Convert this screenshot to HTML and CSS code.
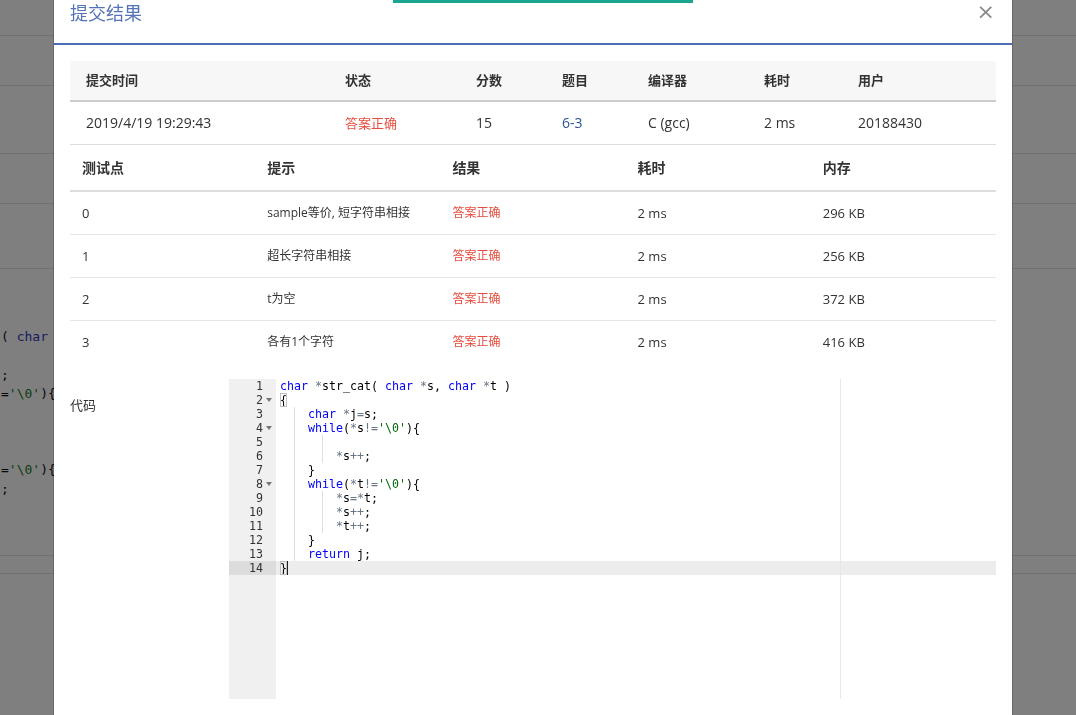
FILE: index.html
```html
<!DOCTYPE html>
<html lang="zh-CN">
<head>
<meta charset="utf-8">
<title>提交结果</title>
<link rel="stylesheet" href="styles.css">
</head>
<body>
<div class="page">
  <div class="bg-row r1"></div>
  <div class="bg-row r2"></div>
  <div class="bg-row r3"></div>
  <div class="bg-row r4"></div>
  <div class="bg-row r5"></div>
  <div class="bg-row bg-code-area">
<pre class="bg-code">( <span class="bkw">char</span>

;
=<span class="bstr">'\0'</span>){



=<span class="bstr">'\0'</span>){
;</pre>
  </div>
  <div class="bg-row r7"></div>
</div>

<div class="overlay"></div>
<div class="toast"></div>

<div class="modal">
  <div class="modal-header">
    <span class="modal-title">提交结果</span>
    <span class="modal-close">×</span>
  </div>
  <div class="modal-body">
    <table class="t-summary">
      <colgroup>
        <col class="c1"><col class="c2"><col class="c3"><col class="c4"><col class="c5"><col class="c6"><col class="c7">
      </colgroup>
      <thead>
        <tr><th>提交时间</th><th>状态</th><th>分数</th><th>题目</th><th>编译器</th><th>耗时</th><th>用户</th></tr>
      </thead>
      <tbody>
        <tr>
          <td>2019/4/19 19:29:43</td>
          <td class="ok s13">答案正确</td>
          <td>15</td>
          <td><span class="link">6-3</span></td>
          <td>C (gcc)</td>
          <td>2 ms</td>
          <td>20188430</td>
        </tr>
      </tbody>
    </table>

    <table class="t-cases">
      <thead>
        <tr><th>测试点</th><th>提示</th><th>结果</th><th>耗时</th><th>内存</th></tr>
      </thead>
      <tbody>
        <tr><td>0</td><td class="s12">sample等价, 短字符串相接</td><td class="ok s12">答案正确</td><td>2 ms</td><td>296 KB</td></tr>
        <tr><td>1</td><td class="s12">超长字符串相接</td><td class="ok s12">答案正确</td><td>2 ms</td><td>256 KB</td></tr>
        <tr><td>2</td><td class="s12">t为空</td><td class="ok s12">答案正确</td><td>2 ms</td><td>372 KB</td></tr>
        <tr><td>3</td><td class="s12">各有1个字符</td><td class="ok s12">答案正确</td><td>2 ms</td><td>416 KB</td></tr>
      </tbody>
    </table>

    <div class="code-section">
      <div class="code-label">代码</div>
      <div class="editor">
        <div class="gutter">
          <div class="gcell"><span>1</span><span class="fold"></span></div>
          <div class="gcell"><span>2</span><span class="fold open"></span></div>
          <div class="gcell"><span>3</span><span class="fold"></span></div>
          <div class="gcell"><span>4</span><span class="fold open"></span></div>
          <div class="gcell"><span>5</span><span class="fold"></span></div>
          <div class="gcell"><span>6</span><span class="fold"></span></div>
          <div class="gcell"><span>7</span><span class="fold"></span></div>
          <div class="gcell"><span>8</span><span class="fold open"></span></div>
          <div class="gcell"><span>9</span><span class="fold"></span></div>
          <div class="gcell"><span>10</span><span class="fold"></span></div>
          <div class="gcell"><span>11</span><span class="fold"></span></div>
          <div class="gcell"><span>12</span><span class="fold"></span></div>
          <div class="gcell"><span>13</span><span class="fold"></span></div>
          <div class="gcell active"><span>14</span><span class="fold"></span></div>
        </div>
        <div class="code">
          <div class="print-margin"></div>
          <div class="line"><span class="kw">char</span> <span class="op">*</span>str_cat( <span class="kw">char</span> <span class="op">*</span>s, <span class="kw">char</span> <span class="op">*</span>t )</div>
          <div class="line"><span class="br">{</span></div>
          <div class="line"><span class="ind"></span><span class="kw">char</span> <span class="op">*</span>j<span class="op">=</span>s;</div>
          <div class="line"><span class="ind"></span><span class="kw">while</span>(<span class="op">*</span>s<span class="op">!=</span><span class="str">'\0'</span>){</div>
          <div class="line"><span class="ind"></span><span class="ind"></span></div>
          <div class="line"><span class="ind"></span><span class="ind"></span><span class="op">*</span>s<span class="op">++</span>;</div>
          <div class="line"><span class="ind"></span>}</div>
          <div class="line"><span class="ind"></span><span class="kw">while</span>(<span class="op">*</span>t<span class="op">!=</span><span class="str">'\0'</span>){</div>
          <div class="line"><span class="ind"></span><span class="ind"></span><span class="op">*</span>s<span class="op">=*</span>t;</div>
          <div class="line"><span class="ind"></span><span class="ind"></span><span class="op">*</span>s<span class="op">++</span>;</div>
          <div class="line"><span class="ind"></span><span class="ind"></span><span class="op">*</span>t<span class="op">++</span>;</div>
          <div class="line"><span class="ind"></span>}</div>
          <div class="line"><span class="ind"></span><span class="kw">return</span> j;</div>
          <div class="line active"><span class="br">}</span><span class="cursor"></span></div>
        </div>
      </div>
    </div>
  </div>
</div>
</body>
</html>
```

FILE: styles.css
```css
* { box-sizing: border-box; }

html, body {
  margin: 0;
  padding: 0;
}

body {
  width: 1076px;
  height: 715px;
  overflow: hidden;
  position: relative;
  background: #fff;
  font-family: "Open Sans", "Noto Sans CJK SC", sans-serif;
  color: #333;
}

/* ---------- background page (under the overlay) ---------- */
.bg-row { border-bottom: 1px solid #e3e3e3; }
.r1 { height: 36px; }
.r2 { height: 50px; }
.r3 { height: 68px; }
.r4 { height: 50px; }
.r5 { height: 65px; }
.bg-code-area { height: 287px; padding-top: 58px; overflow: hidden; }
.r7 { height: 18px; }

.bg-code {
  margin: 0;
  padding-left: 1px;
  font-family: "DejaVu Sans Mono", monospace;
  font-size: 13px;
  line-height: 19px;
  color: #111;
}
.bkw { color: #3636b8; }
.bstr { color: #1a7a1a; }

.overlay {
  position: fixed;
  inset: 0;
  background: rgba(0, 0, 0, 0.5);
}

.toast {
  position: absolute;
  left: 393px;
  top: 0;
  width: 300px;
  height: 3px;
  background: #1aa591;
  z-index: 3;
}

/* ---------- modal ---------- */
.modal {
  position: absolute;
  left: 54px;
  top: 0;
  width: 958px;
  height: 715px;
  background: #fff;
  box-shadow: 0 0 0 1px rgba(0, 0, 0, 0.18);
  z-index: 2;
  overflow: hidden;
}

.modal-header {
  height: 45px;
  display: flex;
  justify-content: space-between;
  align-items: flex-start;
  padding: 0 17px 0 16px;
  border-bottom: 2px solid #4d6cb3;
}

.modal-title {
  font-size: 18px;
  line-height: 26px;
  color: #5573b8;
}

.modal-close {
  font-family: "DejaVu Sans", sans-serif;
  font-size: 22px;
  line-height: 24px;
  color: #8a8a8a;
  font-weight: normal;
}

.modal-body {
  padding: 16px 16px 0;
}

/* ---------- tables ---------- */
table {
  width: 100%;
  border-spacing: 0;
  table-layout: fixed;
}

th, td {
  text-align: left;
  white-space: nowrap;
  vertical-align: middle;
}

th { font-weight: 600; color: #333; }

.t-summary .c1 { width: 259px; }
.t-summary .c2 { width: 131px; }
.t-summary .c3 { width: 86px; }
.t-summary .c4 { width: 86px; }
.t-summary .c5 { width: 116px; }
.t-summary .c6 { width: 94px; }
.t-summary .c7 { width: 154px; }

.t-summary th {
  padding: 0 0 0 16px;
  line-height: 39px;
  font-size: 13px;
  background: #f7f7f7;
  border-bottom: 2px solid #cccccc;
}

.t-summary td {
  padding: 0 0 0 16px;
  line-height: 42px;
  font-size: 14px;
  border-bottom: 1px solid #dddddd;
}

.t-cases th {
  padding: 0 0 0 12px;
  line-height: 45px;
  font-size: 14px;
  border-bottom: 2px solid #dddddd;
}

.t-cases td {
  padding: 0 0 0 12px;
  line-height: 42px;
  font-size: 13px;
  border-bottom: 1px solid #e6e6e6;
}

.t-cases tbody tr:last-child td { border-bottom: none; }

.s12 { font-size: 12px !important; }
.s13 { font-size: 13px !important; }
.ok { color: #e74c3c; }
.link { color: #2c5592; }

/* ---------- code ---------- */
.code-section {
  display: flex;
  margin-top: 16px;
}

.code-label {
  width: 159px;
  padding-top: 17px;
  font-size: 13px;
  line-height: 18px;
  color: #333;
}

.editor {
  width: 767px;
  height: 320px;
  display: flex;
  font-family: "DejaVu Sans Mono", monospace;
  font-size: 11.63px;
  line-height: 14px;
  color: #000;
  background: #fff;
}

.gutter {
  width: 47px;
  background: #f0f0f0;
  color: #333;
}

.gcell {
  height: 14px;
  display: flex;
  justify-content: flex-end;
}

.gcell.active { background: #dcdcdc; }

.fold {
  width: 13px;
  height: 14px;
  display: flex;
  align-items: center;
  justify-content: center;
}

.fold.open::before {
  content: "";
  border-left: 3px solid transparent;
  border-right: 3px solid transparent;
  border-top: 4px solid #777;
  margin-left: -1px;
}

.code {
  flex: 1;
  position: relative;
}

.print-margin {
  position: absolute;
  top: 0;
  bottom: 0;
  left: calc(4px + 80ch);
  width: 1px;
  background: #e8e8e8;
}

.line {
  height: 14px;
  padding-left: 4px;
  white-space: pre;
}

.line.active { background: rgba(0, 0, 0, 0.07); }

.ind {
  display: inline-block;
  width: 4ch;
  height: 14px;
  vertical-align: top;
  background-image: linear-gradient(#e0e0e0, #e0e0e0);
  background-size: 1px 100%;
  background-position: 2ch 0;
  background-repeat: no-repeat;
}

.kw { color: #0000ff; }
.op { color: rgb(104, 118, 135); }
.str { color: rgb(3, 106, 7); }

.br {
  display: inline-block;
  height: 14px;
  vertical-align: top;
  outline: 1px solid #c0c0c0;
  outline-offset: -1px;
}

.cursor {
  display: inline-block;
  width: 1px;
  height: 14px;
  vertical-align: top;
  background: #222;
}
```
